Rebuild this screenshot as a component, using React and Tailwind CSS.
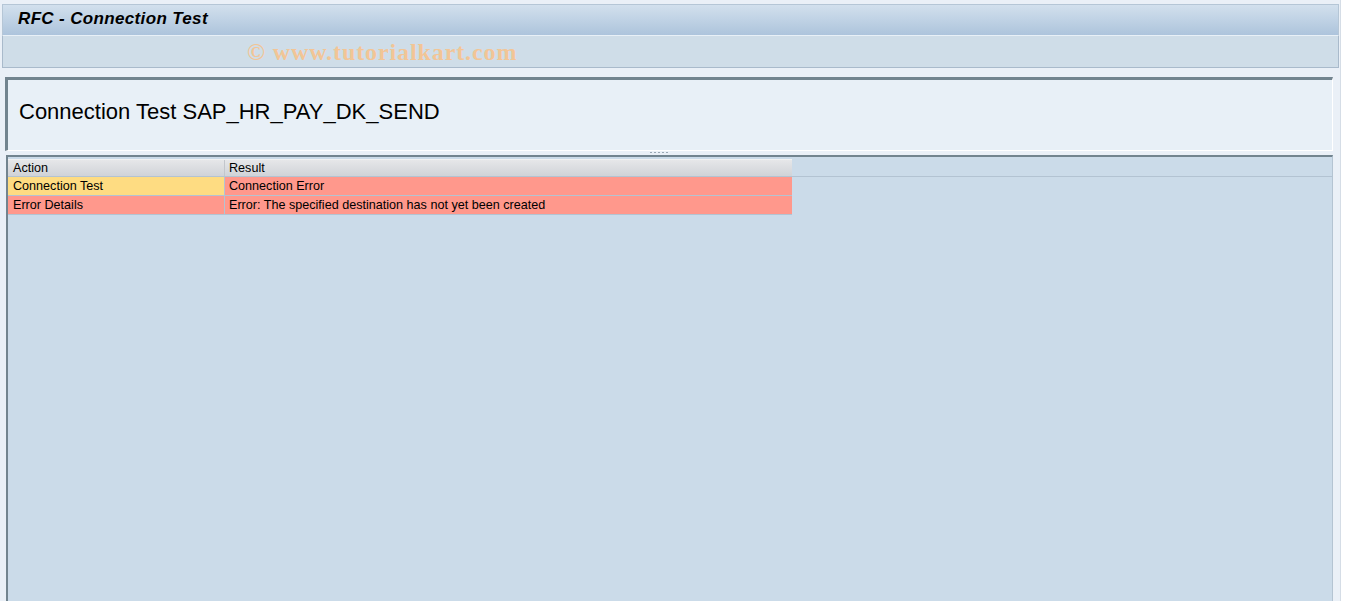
import React from "react";

const rows = [
    { action: "Connection Test", result: "Connection Error", warn: true },
    { action: "Error Details", result: "Error: The specified destination has not yet been created" },
];

export default function App() {
    return (
        <div className="w-[1354px] h-[601px] bg-white flex overflow-hidden" style={{ fontFamily: "'Liberation Sans', Arial, sans-serif" }}>
            <div className="w-[1341px] h-full bg-[#eaf0f7] flex flex-col pl-[2px] pt-[4px] border-r border-[#d5dde6]">
                {/* title bar */}
                <div className="h-[31px] mr-[1px] border-t border-l border-r border-[#b5c6d6] bg-gradient-to-b from-[#d2e0ed] to-[#adc4dc] flex items-center pl-[15px] pb-[2px]">
                    <span className="text-[17px] tracking-[0.35px] font-bold italic text-black">RFC - Connection Test</span>
                </div>
                {/* toolbar */}
                <div className="h-[33px] mr-[1px] bg-[#cfdde8] border-l border-r border-b border-[#a9bacb] border-t border-t-[#e8f0f7] flex items-center pl-[244px]">
                    <span className="text-[24px] tracking-[0.9px] font-bold text-[#f2c596]" style={{ fontFamily: "'Liberation Serif', 'Times New Roman', serif" }}>© www.tutorialkart.com</span>
                </div>
                {/* header panel */}
                <div className="mt-[9px] ml-[3px] mr-[7px] h-[74px] border-t-[3px] border-l-[3px] border-t-[#72848f] border-l-[#72848f] border-r border-b border-[#ffffff] bg-[#e8f0f7] flex items-center pl-[11px] pb-[8px]">
                    <span className="text-[22px] text-black">Connection Test SAP_HR_PAY_DK_SEND</span>
                </div>
                {/* splitter */}
                <div className="h-[4px] ml-[4px] mr-[7px] flex justify-center items-start">
                    <div className="flex gap-[2px] mt-[1px] ml-[-22px]">
                        <div className="w-[2px] h-[1px] bg-[#9aa8b4]" />
                        <div className="w-[2px] h-[1px] bg-[#9aa8b4]" />
                        <div className="w-[2px] h-[1px] bg-[#9aa8b4]" />
                        <div className="w-[2px] h-[1px] bg-[#9aa8b4]" />
                        <div className="w-[2px] h-[1px] bg-[#9aa8b4]" />
                    </div>
                </div>
                {/* grid panel */}
                <div className="flex-1 ml-[4px] mr-[7px] border-t-2 border-l-2 border-[#72848f] border-r border-r-[#b4c4d2] bg-[#cbdbe9] pt-[2px] text-[12.6px] text-black">
                    <div className="border-b border-[#b3c3d2]">
                        <div className="flex w-[784px] h-[17px] bg-gradient-to-b from-[#e6e7e9] to-[#d0d3d8] border-t border-[#f2f2f2]">
                            <div className="w-[217px] border-r border-[#c2c6cc] pl-[5px] flex items-center">Action</div>
                            <div className="flex-1 pl-[4px] flex items-center">Result</div>
                        </div>
                    </div>
                    {rows.map((r) => (
                        <div key={r.action} className="flex w-[784px] h-[19px] border-b border-[#b3c3d2]">
                            <div className={`w-[217px] border-r border-[#b3c3d2] pl-[5px] flex items-center ${r.warn ? "bg-[#fedc82]" : "bg-[#ff988c]"}`}>
                                {r.action}
                            </div>
                            <div className="flex-1 bg-[#ff988c] pl-[4px] flex items-center">{r.result}</div>
                        </div>
                    ))}
                </div>
            </div>
        </div>
    );
}
